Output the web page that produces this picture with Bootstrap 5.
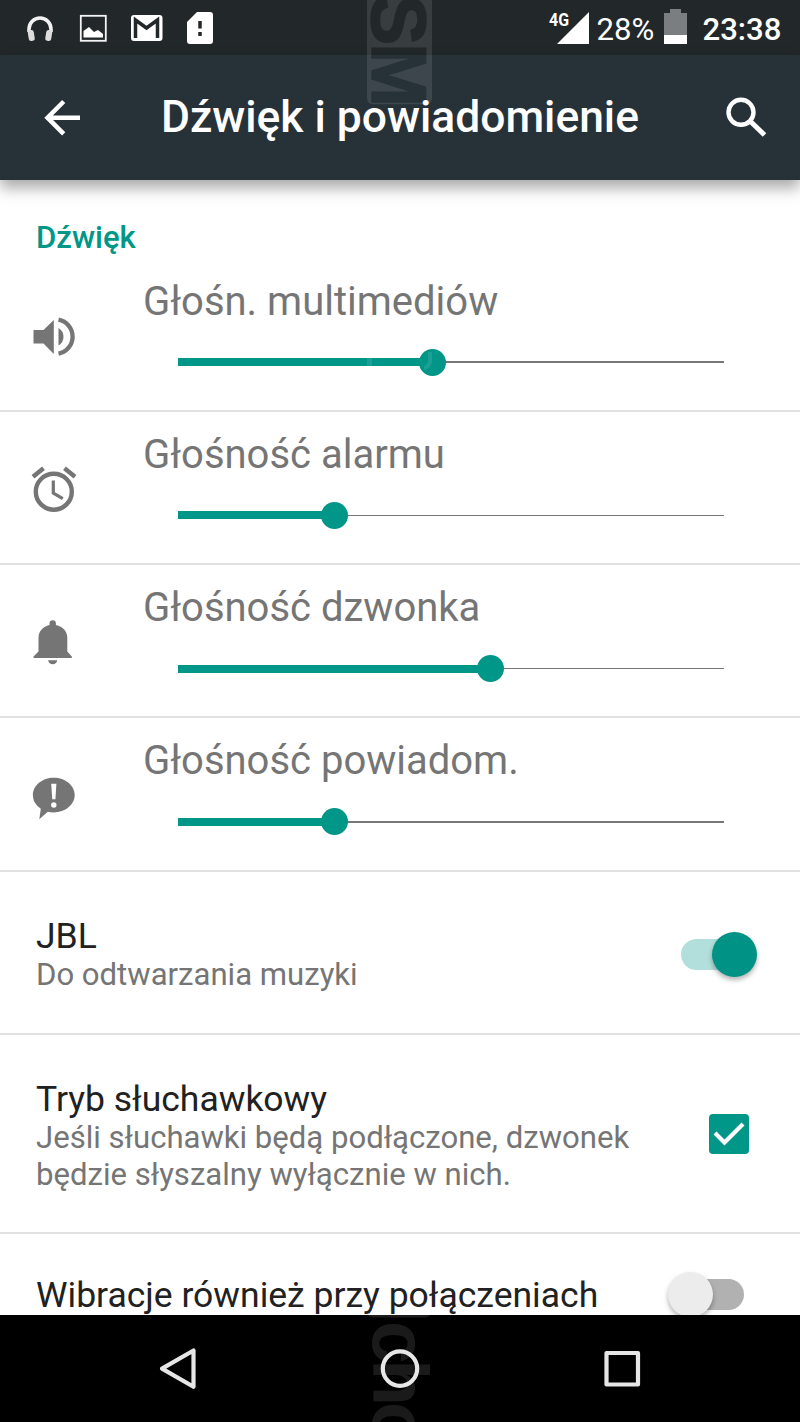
<!DOCTYPE html>
<html lang="pl">
<head>
<meta charset="utf-8">
<meta name="viewport" content="width=device-width, initial-scale=1">
<title>Dźwięk i powiadomienie</title>
<link href="https://cdn.jsdelivr.net/npm/bootstrap@5.3.0/dist/css/bootstrap.min.css" rel="stylesheet">
<style>
:root { --teal: #009688; --grey: #757575; }
body { font-family: Roboto, sans-serif; color: #212121; background: #fff; }
.screen { width: 800px; height: 1422px; }
.status { height: 55px; background: #22272a; color: #fff; font-size: 31.1px; line-height: 55px; }
.appbar { height: 125px; background: #263238; color: #fff; font-size: 44.4px; font-weight: 500; line-height: 125px; box-shadow: 0 8px 14px rgba(0,0,0,.34); }
.content-list { height: 1135px; background: #fff; }
.section { height: 78.6px; padding: 39px 36px 0; color: var(--teal); font-size: 31.1px; font-weight: 500; line-height: 38px; }
.setting { border-bottom: 2px solid #e0e0e0; }
.volume { height: 153.3px; }
.volume-icon { width: 143px; padding: 53px 0 0 28.5px; }
.volume-icon svg { width: 50px; height: 50px; fill: var(--grey); }
.volume-title { color: var(--grey); font-size: 40px; line-height: 48px; padding-top: 19px; }
.track { width: 546px; height: 27px; margin: 23px 0 0 35px; }
.track-fill { height: 8px; background: var(--teal); }
.track-thumb { width: 27px; height: 27px; margin: 0 -13.5px; border-radius: 50%; background: var(--teal); z-index: 1; }
.track-rest { height: 1.5px; background: #777; }
.item-title { font-size: 35.5px; line-height: 42px; }
.item-note { font-size: 31.1px; line-height: 36.5px; color: var(--grey); }
.toggle { width: 76px; height: 45px; }
.toggle-bar { height: 31px; border-radius: 16px; width: 62px; }
.toggle-knob { width: 45px; height: 45px; border-radius: 50%; box-shadow: 0 3px 5px rgba(0,0,0,.3); }
.navkeys { height: 107px; background: #000; }
.stamp { left: 0; top: 0; width: 800px; height: 1422px; pointer-events: none; z-index: 2; }
.stamp text { font-family: "Liberation Sans", sans-serif; font-weight: bold; font-size: 77px; }
</style>
</head>
<body>
<div class="screen position-relative overflow-hidden d-flex flex-column">
  <header class="position-relative z-1">
    <div class="status d-flex justify-content-between">
      <svg width="240" height="55" viewBox="0 0 240 55">
        <path d="M29 32v-3a11 11 0 0 1 22 0v3" fill="none" stroke="#f2f2f2" stroke-width="3.6"/>
        <rect x="28.2" y="30" width="6" height="11" rx="2.5" fill="#ddd" transform="rotate(-9 31 35)"/>
        <rect x="45.8" y="30" width="6" height="11" rx="2.5" fill="#ddd" transform="rotate(9 49 35)"/>
        <rect x="80.8" y="15.8" width="25" height="25" fill="none" stroke="#f4f4f4" stroke-width="1.8"/>
        <path d="M83.500 37.500v-6.500l5.500-4 5 5 4-2 5 4v3.500z" fill="#fff"/>
        <rect x="131" y="15" width="31.500" height="26" rx="3" fill="#fff"/>
        <path d="M135.500 38V20l11 8 11-8v18" fill="none" stroke="#22272a" stroke-width="3.500"/>
        <path d="M197 12h13q3 0 3 3v26q0 3-3 3h-20q-3 0-3-3V22z" fill="#fff"/>
        <path d="M200 21v7.500M200 32v4" stroke="#22272a" stroke-width="3.500"/>
      </svg>
      <svg width="260" height="55" viewBox="540 0 260 55" fill="#fff">
        <text x="549" y="26" font-size="17.500" font-weight="700" textLength="20" lengthAdjust="spacingAndGlyphs">4G</text>
        <path d="M589 12v32h-32z"/>
        <text x="596.500" y="40" font-size="31.100">28%</text>
        <path d="M670 9h11v4h6v22h-23V13h6z" fill="#7b7e80"/>
        <path d="M664 35h23v9h-23z"/>
        <text x="702.500" y="40" font-size="31.100" font-weight="500">23:38</text>
      </svg>
    </div>
    <div class="appbar d-flex">
      <svg width="161" height="125" viewBox="0 55 161 125" fill="none" stroke="#fff" stroke-width="4.500"><path d="M80 117.700H48M63.700 101.500L47.500 117.700l16.200 16.200"/></svg>
      <div class="flex-grow-1 text-nowrap">Dźwięk i powiadomienie</div>
      <svg width="100" height="125" viewBox="700 55 100 125" fill="none" stroke="#fff"><circle cx="741" cy="112.300" r="12.500" stroke-width="4.400"/><path d="M749.500 120.500l15 14.500" stroke-width="5"/></svg>
    </div>
  </header>

  <main class="content-list overflow-hidden">
    <div class="section">Dźwięk</div>
    <div class="setting volume d-flex">
      <div class="volume-icon"><svg viewBox="28.500 310 50 50"><path d="M33 328h10l10.300-10v34L43 341.500H33zM58 326q5 3 5 8.700t-5 8.800z"/><path d="M58 317.700a17.300 17.300 0 0 1 0 34" fill="none" stroke="#757575" stroke-width="4.300"/></svg></div>
      <div><div class="volume-title">Głośn. multimediów</div>
      <div class="track d-flex align-items-center"><div class="track-fill" style="width:46.600%"></div><div class="track-thumb"></div><div class="track-rest flex-grow-1"></div></div></div>
    </div>
    <div class="setting volume d-flex">
      <div class="volume-icon"><svg viewBox="28.500 463.500 50 50"><g fill="none" stroke="#757575"><circle cx="53.300" cy="490.200" r="18" stroke-width="4.400"/><path d="M32.500 475.200l10.500-8.500M74.500 475.200l-10.500-8.500" stroke-width="4.400"/><path d="M52.800 479v12.500l9.500 5.700" stroke-width="3.200"/></g></svg></div>
      <div><div class="volume-title">Głośność alarmu</div>
      <div class="track d-flex align-items-center"><div class="track-fill" style="width:28.600%"></div><div class="track-thumb"></div><div class="track-rest flex-grow-1"></div></div></div>
    </div>
    <div class="setting volume d-flex">
      <div class="volume-icon"><svg viewBox="28.500 617 50 50"><path d="M33 657v-1.500l5-5V637c0-7 4.500-11.500 11-13v-1.500a3.200 3.200 0 0 1 6.400 0v1.500c7 1.500 11.400 6 11.400 13v13.500l4.500 5v1.500zM47.600 659.200h9.200c-.8 5.500-8.400 5.500-9.200 0z"/></svg></div>
      <div><div class="volume-title">Głośność dzwonka</div>
      <div class="track d-flex align-items-center"><div class="track-fill" style="width:57.200%"></div><div class="track-thumb"></div><div class="track-rest flex-grow-1"></div></div></div>
    </div>
    <div class="setting volume d-flex">
      <div class="volume-icon"><svg viewBox="28.500 770.500 50 50"><path d="M53.300 777.300c11.500 0 20.900 7.800 20.900 17.300s-9.400 17.400-20.900 17.400q-3 0-6-.7l-8.500 7.500 1.500-10.500c-5-3.500-7.900-8-7.900-13.700 0-9.500 9.400-17.300 20.900-17.300z"/><path d="M50.700 783.200h5.200l-1 15.500h-3.200z" fill="#fff"/><circle cx="53.300" cy="804.500" r="2.700" fill="#fff"/></svg></div>
      <div><div class="volume-title">Głośność powiadom.</div>
      <div class="track d-flex align-items-center"><div class="track-fill" style="width:28.600%"></div><div class="track-thumb"></div><div class="track-rest flex-grow-1"></div></div></div>
    </div>
    <div class="setting jbl-row d-flex justify-content-between align-items-center">
      <div><div class="item-title">JBL</div><div class="item-note">Do odtwarzania muzyki</div></div>
      <div class="toggle d-flex align-items-center"><div class="toggle-bar" style="background:#b2dfdb"></div><div class="toggle-knob flex-shrink-0" style="background:#009285;margin-left:-31px"></div></div>
    </div>
    <div class="setting headset-row d-flex justify-content-between align-items-center">
      <div class="text-nowrap"><div class="item-title">Tryb słuchawkowy</div><div class="item-note">Jeśli słuchawki będą podłączone, dzwonek<br>będzie słyszalny wyłącznie w nich.</div></div>
      <svg width="40" height="40" viewBox="0 0 40 40"><rect width="40" height="40" rx="4" fill="#009688"/><path d="M6 19l9.500 9.500L34 10" fill="none" stroke="#fff" stroke-width="4.200"/></svg>
    </div>
    <div class="vibrate-row d-flex justify-content-between">
      <div class="item-title">Wibracje również przy połączeniach</div>
      <div class="toggle d-flex align-items-center"><div class="toggle-knob flex-shrink-0" style="background:#ececec;z-index:1"></div><div class="toggle-bar" style="background:#b1b1b1;margin-left:-31px"></div></div>
    </div>
  </main>
  <style>
  .jbl-row { height: 163px; padding: 4px 43px 0 36px; }
  .headset-row { height: 199.500px; padding: 4px 51px 0 36px; }
  .headset-row svg { margin-top: -4px; }
  .vibrate-row { padding: 38px 56px 0 36px; }
  .vibrate-row .item-title { padding-top: 2px; }
  </style>

  <nav class="navkeys">
    <svg width="800" height="107" viewBox="0 1315 800 107" fill="none" stroke="#e6e6e6" stroke-width="4.200" stroke-linejoin="round">
      <path d="M193.500 1350.500v36.300l-31.500-18.200z"/><circle cx="400" cy="1368.600" r="17.200"/><rect x="606.500" y="1353" width="31.500" height="31.500"/>
    </svg>
  </nav>

  <svg class="stamp position-absolute" viewBox="0 0 800 1422">
    <mask id="cut"><rect x="367" y="-20" width="65" height="124.500" rx="6" fill="#fff"/><text transform="translate(372 -6) rotate(90)" fill="#000" stroke="#000" stroke-width="1.500">S</text><text transform="translate(372 43) rotate(90)" fill="#000" stroke="#000" stroke-width="1.500" textLength="63">M</text></mask>
    <rect x="367" y="-20" width="65" height="124.500" mask="url(#cut)" fill="#fff" fill-opacity=".1"/>
    <path d="M368 1315h62q-2 2.500-5 2.500h-52q-3 0-5-2.500z" fill="#1c1c1c"/>
    <g fill="#fff" fill-opacity=".1"><text transform="translate(373 1321) rotate(90)">c</text><text transform="translate(373 1359) rotate(90)">h</text><text transform="translate(373 1402) rotate(90)">o</text></g>
    <path d="M367 358h5v8h-5z" fill="#fff" fill-opacity=".1"/><path d="M424 368q6-1 6-8v-8" fill="none" stroke="#fff" stroke-opacity=".1" stroke-width="4"/>
  </svg>
</div>
<script src="https://cdn.jsdelivr.net/npm/bootstrap@5.3.0/dist/js/bootstrap.bundle.min.js"></script>
</body>
</html>
